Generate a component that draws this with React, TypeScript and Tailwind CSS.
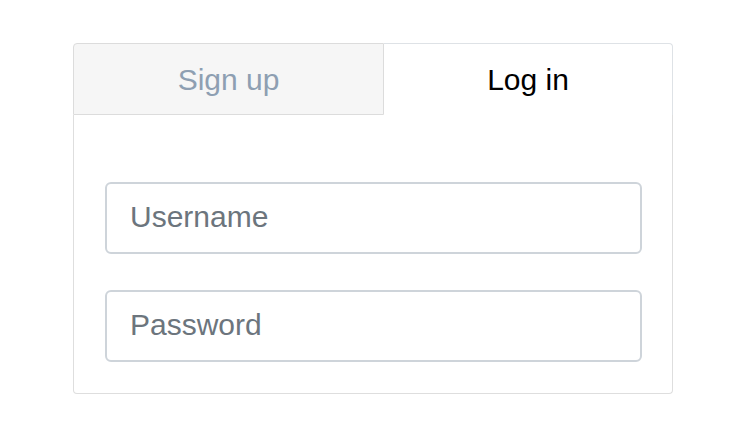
import { useState } from "react";

export default function App() {
  const [tab, setTab] = useState<"signup" | "login">("login");

  return (
    <div className="min-h-screen bg-white pt-[43px] font-['Liberation_Sans',Arial,sans-serif]">
      <div className="ml-[73px] w-[600px]">
        <div className="flex h-[72px]">
          <button
            onClick={() => setTab("signup")}
            className="w-[311px] border border-[#dcdcdc] rounded-tl-[4px] bg-[#f6f6f6] text-[30px] text-[#8e9fb2] flex items-center justify-center"
          >
            Sign up
          </button>
          <button
            onClick={() => setTab("login")}
            className="flex-1 border-t border-r border-[#dee2e6] rounded-tr-[4px] bg-white text-[30px] text-black flex items-center justify-center"
          >
            Log in
          </button>
        </div>
        <div className="border-x border-b border-[#dedede] rounded-b-[4px] pl-[31px] pr-[30px] pt-[67px] pb-[31px] flex flex-col gap-[36px]">
          <input
            type="text"
            placeholder="Username"
            className="h-[72px] w-full rounded-[6px] border-2 border-[#ced4da] px-[23px] pb-[2px] text-[30px] text-[#495057] placeholder:text-[#6c757d] outline-none"
          />
          <input
            type="password"
            placeholder="Password"
            className="h-[72px] w-full rounded-[6px] border-2 border-[#ced4da] px-[23px] pb-[2px] text-[30px] text-[#495057] placeholder:text-[#6c757d] outline-none"
          />
        </div>
      </div>
    </div>
  );
}
